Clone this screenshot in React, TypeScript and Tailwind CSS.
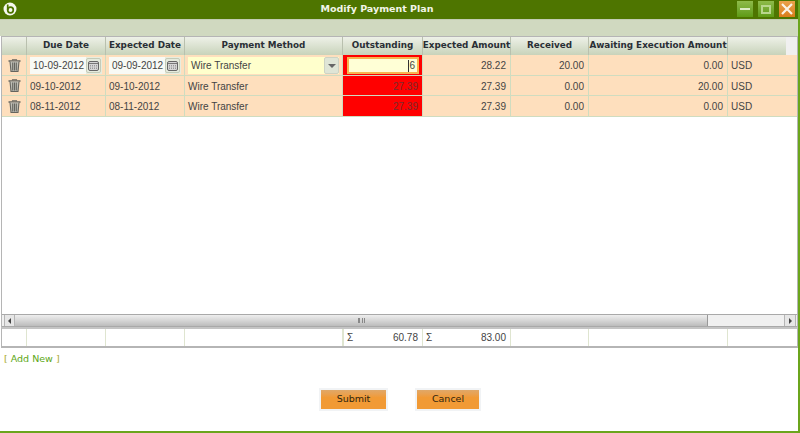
import { useState } from "react";

const cols = "grid grid-cols-[25px_79px_79px_158px_80px_88px_78px_139px_70px]";
const rowCell = "flex items-center border-r border-[#cfdcc0] px-[3px] pt-px overflow-hidden whitespace-nowrap";
const numCell = rowCell + " justify-end !pr-[4px]";
const headCell =
  "flex items-center justify-center whitespace-nowrap border-r border-[#b9c0ae] bg-gradient-to-b from-[#eef1e8] to-[#c8d3ba] font-['DejaVu_Sans',sans-serif] text-[8.8px] font-bold text-[#2a2f36]";

const rows = [
  { due: "10-09-2012", expected: "09-09-2012", outstanding: "6", amount: "28.22", received: "20.00", awaiting: "0.00", height: "h-[21px]" },
  { due: "09-10-2012", expected: "09-10-2012", outstanding: "27.39", amount: "27.39", received: "0.00", awaiting: "20.00", height: "h-[20px]" },
  { due: "08-11-2012", expected: "08-11-2012", outstanding: "27.39", amount: "27.39", received: "0.00", awaiting: "0.00", height: "h-[21px]" },
];

const Trash = () => (
  <svg width="13" height="13" viewBox="0 0 13 13" fill="none" stroke="#65655f" strokeWidth="1.1">
    <path d="M0.5 2h12" strokeWidth="1.5" />
    <path d="M4.5 1.5V.7h4v.8" />
    <path d="M2 2.5l1 10h7l1-10" fill="#bdbdb5" />
    <path d="M4.7 3.5v8M6.5 3.5v8M8.3 3.5v8" />
  </svg>
);

const CalendarButton = () => (
  <span className="flex h-[15px] w-[15px] shrink-0 items-center justify-center rounded-[2px] border border-[#c4cbb9] bg-[#e5ebdd]">
    <svg width="11" height="10" viewBox="0 0 11 10">
      <rect x="0.5" y="0.5" width="10" height="9" rx="1.5" fill="#d5d5d5" stroke="#666" />
      <path d="M1 2.5h9" stroke="#777" />
      <path d="M2 4.5h7M2 6h7M2 7.5h7" stroke="#999" strokeDasharray="1 1" />
    </svg>
  </span>
);

const DateField = ({ value }: { value: string }) => (
  <div className="flex h-[17px] w-[72px] items-center justify-between bg-[#e7eddf] pr-[1px]">
    <span className="flex h-full flex-1 items-center bg-[#f8faf5] pl-[3px]">{value}</span>
    <CalendarButton />
  </div>
);

export default function App() {
  const [plan] = useState(rows);

  return (
    <div className="flex h-[433px] w-[800px] flex-col overflow-hidden border-r-2 border-b-2 border-[#6ba51c] bg-white font-['Liberation_Sans',sans-serif] text-[10px] text-[#444]">
      <div className="relative flex h-[19px] shrink-0 items-center justify-center bg-[#4e7500] pr-[44px] font-['DejaVu_Sans',sans-serif] text-[9.5px] font-bold text-[#f2f5e8]">
        <svg className="absolute left-[3px] top-[2px]" width="14" height="14" viewBox="0 0 14 14">
          <circle cx="7" cy="7" r="6.5" fill="#f5f8ef" />
          <circle cx="7.5" cy="8" r="2.8" fill="none" stroke="#4e7500" strokeWidth="1.7" />
          <path d="M4.7 2.5v5.5" stroke="#4e7500" strokeWidth="1.7" />
        </svg>
        Modify Payment Plan
        <div className="absolute right-[3px] top-[1px] flex gap-[5px]">
          <span className="flex h-[16px] w-[16px] items-center justify-center bg-gradient-to-b from-[#8fbb4a] to-[#5e9a12]">
            <span className="h-[2px] w-[10px] bg-[#dcebc4]" />
          </span>
          <span className="flex h-[16px] w-[16px] items-center justify-center bg-gradient-to-b from-[#8fbb4a] to-[#5e9a12]">
            <span className="h-[9px] w-[10px] border-2 border-[#b9d68c]" />
          </span>
          <span className="flex h-[16px] w-[16px] items-center justify-center bg-gradient-to-b from-[#eba24a] to-[#d97d18]">
            <svg width="12" height="12" viewBox="0 0 12 12" stroke="#fbf3e6" strokeWidth="2.2">
              <path d="M1 1l10 10M11 1L1 11" />
            </svg>
          </span>
        </div>
      </div>

      <div className="h-[17px] shrink-0 border-t border-[#c2ccb2] bg-[#d0d9c0]" />

      <div className="ml-px flex h-[291px] shrink-0 flex-col border-x border-t border-x-[#b5b5b5] border-t-[#b5b5b5]">
        <div className={cols + " h-[18px] shrink-0 bg-[#f0f0f0]"}>
          <div className={headCell} />
          <div className={headCell}>Due Date</div>
          <div className={headCell}>Expected Date</div>
          <div className={headCell}>Payment Method</div>
          <div className={headCell}>Outstanding</div>
          <div className={headCell}>Expected Amount</div>
          <div className={headCell}>Received</div>
          <div className={headCell}>Awaiting Execution Amount</div>
          <div className={headCell + " w-[58px] border-r-0"} />
        </div>

        {plan.map((row, i) => (
          <div key={row.due} className={cols + " " + row.height + " shrink-0 border-b border-[#cfdcc0] bg-[#fedfbd]"}>
            <div className={rowCell + " justify-center !px-0 !pt-0"}>
              <Trash />
            </div>
            <div className={rowCell}>{i === 0 ? <DateField value={row.due} /> : row.due}</div>
            <div className={rowCell}>{i === 0 ? <DateField value={row.expected} /> : row.expected}</div>
            <div className={rowCell}>
              {i === 0 ? (
                <div className="flex h-[17px] w-[151px] items-center justify-between bg-[#ffffcc] pl-[3px]">
                  Wire Transfer
                  <span className="flex h-full w-[15px] items-center justify-center rounded-[2px] border border-[#cdd3c4] bg-[#dfe5d6]">
                    <span className="h-0 w-0 border-x-[4px] border-t-[4px] border-x-transparent border-t-[#666]" />
                  </span>
                </div>
              ) : (
                "Wire Transfer"
              )}
            </div>
            <div className="flex items-center justify-end border-r border-[#cfdcc0] bg-[#ff0000] pl-[3px] pr-[4px] pt-px text-[#7c2a2a]">
              {i === 0 ? (
                <div className="-mr-px flex h-[17px] w-[72px] items-center justify-end border-2 border-[#f7b44f] bg-[#ffffd6] pr-[2px] text-[#444]">
                  <span className="border-l border-[#333] leading-[12px]">{row.outstanding}</span>
                </div>
              ) : (
                row.outstanding
              )}
            </div>
            <div className={numCell}>{row.amount}</div>
            <div className={numCell}>{row.received}</div>
            <div className={numCell}>{row.awaiting}</div>
            <div className={rowCell + " border-r-0"}>USD</div>
          </div>
        ))}

        <div className="flex-1" />

        <div className="flex h-[13px] shrink-0 items-stretch border-y border-[#a9a9a9] bg-[#f0f0f0]">
          <span className="ml-[2px] flex w-[11px] items-center justify-center border-x border-[#b5b5b5] bg-[#e6e6e6]">
            <span className="h-0 w-0 border-y-[3px] border-r-[3px] border-y-transparent border-r-[#444]" />
          </span>
          <span className="relative w-[693px] border-r border-[#999] bg-gradient-to-b from-[#eeeeee] via-[#d6d6d6] to-[#bcbcbc]">
            <span className="absolute left-[343px] top-[3px] h-[5px] w-[7px] border-x border-[#888] bg-[repeating-linear-gradient(90deg,#888_0,#888_1px,transparent_1px,transparent_3px)]" />
          </span>
          <span className="flex-1" />
          <span className="mr-[1px] flex w-[12px] items-center justify-center border-x border-[#b5b5b5] bg-[#e6e6e6]">
            <span className="h-0 w-0 border-y-[3px] border-l-[3px] border-y-transparent border-l-[#444]" />
          </span>
        </div>
      </div>

      <div className={cols + " ml-px h-[21px] shrink-0 border-x border-t-2 border-b-2 border-x-[#b5b5b5] border-t-[#c4c4c4] border-b-[#b5b5b5]"}>
        <div className="border-r border-[#dfe5d0]" />
        <div className="border-r border-[#dfe5d0]" />
        <div className="border-r border-[#dfe5d0]" />
        <div className="border-r border-[#dfe5d0]" />
        <div className="flex items-center justify-between border-x border-[#dfe5d0] pl-[3px] pr-[4px]">
          <span>Σ</span>
          <span>60.78</span>
        </div>
        <div className="flex items-center justify-between border-r border-[#dfe5d0] pl-[3px] pr-[4px]">
          <span>Σ</span>
          <span>83.00</span>
        </div>
        <div className="border-r border-[#dfe5d0]" />
        <div className="border-r border-[#dfe5d0]" />
        <div />
      </div>

      <div className="mt-[4px] pl-[4px] font-['DejaVu_Sans',sans-serif] text-[9.5px] leading-[13px] text-[#5da715]">
        <span className="text-[#a9a92a]">[</span> Add New <span className="text-[#a9a92a]">]</span>
      </div>

      <div className="mt-[23px] flex gap-[27px] pl-[319px] font-['DejaVu_Sans',sans-serif]">
        <button className="h-[23px] w-[69px] border-2 border-[#f1f3f5] bg-gradient-to-b from-[#e0a868] via-[#f19a35] via-40% to-[#f19a35] text-[9.5px] text-[#2f2410]">
          Submit
        </button>
        <button className="h-[23px] w-[66px] border-2 border-[#f1f3f5] bg-gradient-to-b from-[#e0a868] via-[#f19a35] via-40% to-[#f19a35] text-[9.5px] text-[#2f2410]">
          Cancel
        </button>
      </div>
    </div>
  );
}
